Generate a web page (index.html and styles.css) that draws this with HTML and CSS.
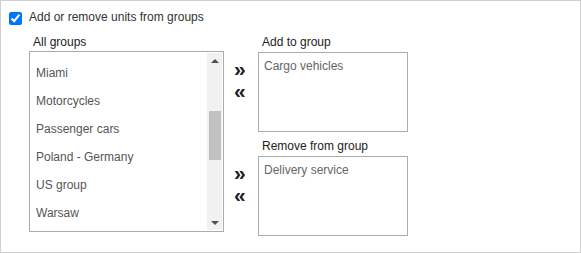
FILE: index.html
```html
<!DOCTYPE html>
<html lang="en">
<head>
    <meta charset="UTF-8">
    <meta name="viewport" content="width=device-width, initial-scale=1.0">
    <title>Unit groups</title>
    <link rel="stylesheet" href="styles.css">
</head>
<body>
<div class="panel">
    <label class="header">
        <input type="checkbox" id="groupsToggle" checked>
        <span>Add or remove units from groups</span>
    </label>

    <div class="groups">
        <div class="all-groups">
            <div class="field-label">All groups</div>
            <div class="listbox">
                <ul class="list-items">
                    <li>Miami</li>
                    <li>Motorcycles</li>
                    <li>Passenger cars</li>
                    <li>Poland - Germany</li>
                    <li>US group</li>
                    <li>Warsaw</li>
                </ul>
                <div class="scrollbar">
                    <div class="scroll-btn"><span class="tri-up"></span></div>
                    <div class="scroll-track">
                        <div class="scroll-thumb"></div>
                    </div>
                    <div class="scroll-btn"><span class="tri-down"></span></div>
                </div>
            </div>
        </div>

        <div class="targets">
            <div class="target">
                <div class="movers">
                    <div class="mover">&raquo;</div>
                    <div class="mover">&laquo;</div>
                </div>
                <div class="target-field">
                    <div class="field-label">Add to group</div>
                    <div class="target-box">Cargo vehicles</div>
                </div>
            </div>
            <div class="target">
                <div class="movers">
                    <div class="mover">&raquo;</div>
                    <div class="mover">&laquo;</div>
                </div>
                <div class="target-field">
                    <div class="field-label">Remove from group</div>
                    <div class="target-box">Delivery service</div>
                </div>
            </div>
        </div>
    </div>
</div>
</body>
</html>
```

FILE: styles.css
```css
body {
    margin: 0;
    font-family: "Liberation Sans", Arial, sans-serif;
    font-size: 12px;
    color: #333;
    background-color: #fff;
}
.panel {
    width: 581px;
    height: 253px;
    box-sizing: border-box;
    border: 1px solid #cfcfcf;
    overflow: hidden;
}
.header {
    display: flex;
    align-items: flex-start;
    padding: 8px 0 0 8px;
    line-height: 16px;
    color: #333;
}
.header input {
    width: 13px;
    height: 13px;
    margin: 3px 7px 0 0;
}
.groups {
    display: flex;
    margin-top: 9px;
    padding-left: 28px;
}
.field-label {
    line-height: 16px;
    padding-left: 4px;
    margin-bottom: 1px;
    color: #222;
}
.listbox {
    display: flex;
    width: 195px;
    height: 181px;
    box-sizing: border-box;
    border: 1px solid #ababab;
    padding: 1px;
}
.list-items {
    flex: 1;
    list-style: none;
    margin: 0;
    padding: 6px 0 0 5px;
    overflow: hidden;
    color: #555;
}
.list-items li {
    line-height: 28px;
    white-space: nowrap;
}
.scrollbar {
    display: flex;
    flex-direction: column;
    width: 15px;
    background-color: #f1f1f1;
}
.scroll-btn {
    height: 15px;
    display: flex;
    align-items: center;
    justify-content: center;
}
.tri-up {
    width: 0;
    height: 0;
    border-left: 4px solid transparent;
    border-right: 4px solid transparent;
    border-bottom: 4px solid #505050;
}
.tri-down {
    width: 0;
    height: 0;
    border-left: 4px solid transparent;
    border-right: 4px solid transparent;
    border-top: 4px solid #505050;
}
.scroll-track {
    flex: 1;
}
.scroll-thumb {
    width: 12px;
    height: 49px;
    margin: 43px 0 0 2px;
    background-color: #c1c1c1;
}
.targets {
    display: flex;
    flex-direction: column;
    gap: 6px;
}
.target {
    display: flex;
}
.movers {
    width: 34px;
    padding: 24px 0 0 10px;
    box-sizing: border-box;
}
.mover {
    font-size: 21px;
    font-weight: bold;
    line-height: 22px;
    color: #1d1d28;
    cursor: pointer;
}
.target-field .field-label {
    margin-bottom: 2px;
}
.target-box {
    width: 150px;
    height: 80px;
    box-sizing: border-box;
    border: 1px solid #ababab;
    padding: 5px;
    line-height: 16px;
    color: #666;
}
```
